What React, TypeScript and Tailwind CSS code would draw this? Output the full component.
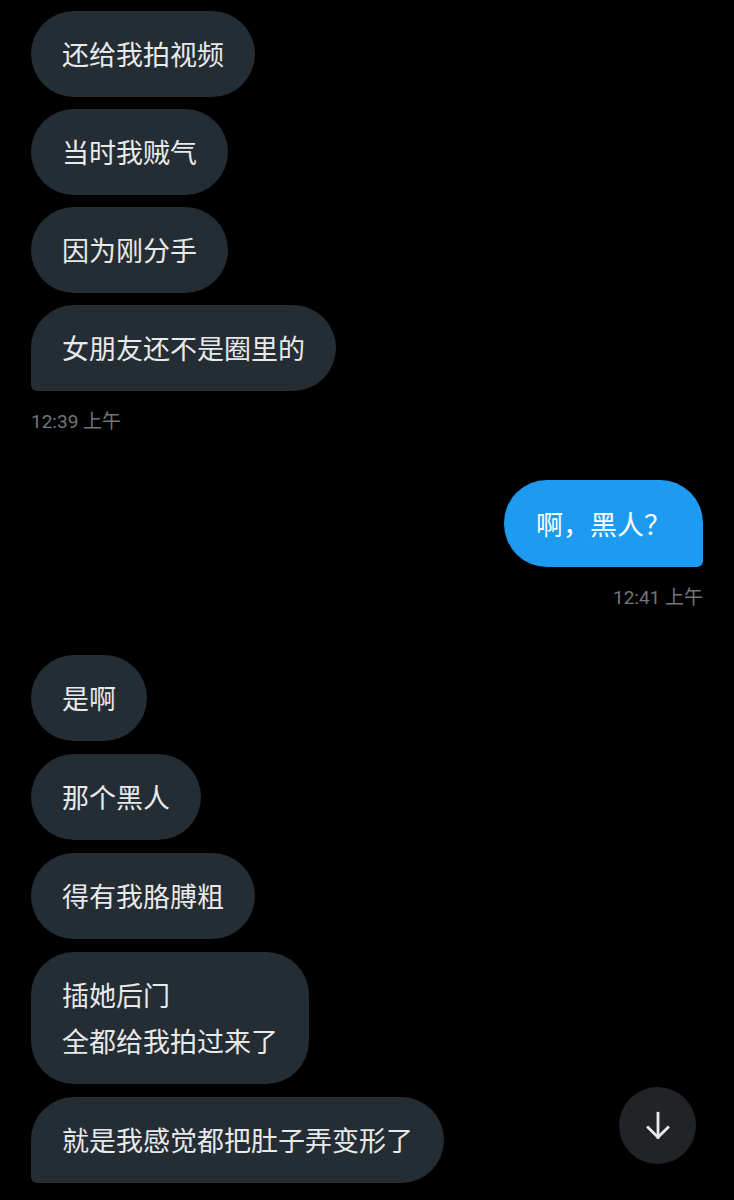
import React from "react";

const font = { fontFamily: '"Noto Sans CJK SC", "Noto Sans", sans-serif' };

function Bubble({ lines, last }: { lines: string[]; last?: boolean }) {
  return (
    <div
      className={`self-start bg-[#242d34] text-[#e7e9ea] text-[27px] leading-[46px] px-[31px] py-[20px] rounded-[43px] ${
        last ? "rounded-bl-[6px]" : ""
      }`}
    >
      {lines.map((l) => (
        <div key={l}>{l}</div>
      ))}
    </div>
  );
}

function Time({ text, right }: { text: string; right?: boolean }) {
  return (
    <div
      className={`text-[19px] leading-[24px] text-[#71767b] mt-[19px] ${right ? "self-end" : "self-start"}`}
      style={{ fontFamily: 'Roboto, "Noto Sans CJK SC", sans-serif' }}
    >
      {text}
    </div>
  );
}

export default function App() {
  return (
    <div className="relative w-[734px] h-[1200px] bg-black overflow-hidden" style={font}>
      <div className="flex flex-col px-[31px] pt-[11px]">
        <div className="flex flex-col gap-[12px]">
          <Bubble lines={["还给我拍视频"]} />
          <Bubble lines={["当时我贼气"]} />
          <Bubble lines={["因为刚分手"]} />
          <Bubble lines={["女朋友还不是圈里的"]} last />
        </div>
        <Time text="12:39 上午" />

        <div className="self-end mt-[46px] bg-[#1d9bf0] text-white text-[27px] leading-[46px] px-[32px] py-[20.5px] rounded-[43px] rounded-br-[6px]">
          啊，黑人？
        </div>
        <Time text="12:41 上午" right />

        <div className="flex flex-col gap-[13px] mt-[45px]">
          <Bubble lines={["是啊"]} />
          <Bubble lines={["那个黑人"]} />
          <Bubble lines={["得有我胳膊粗"]} />
          <Bubble lines={["插她后门", "全都给我拍过来了"]} />
          <Bubble lines={["就是我感觉都把肚子弄变形了"]} last />
        </div>
      </div>

      {/* scroll to bottom */}
      <div className="absolute left-[619px] top-[1087px] w-[77px] h-[77px] rounded-full bg-[#212327] flex items-center justify-center">
        <svg width="34" height="34" viewBox="0 0 24 24" fill="none" stroke="#e7e9ea" strokeWidth="2" strokeLinecap="square">
          <path d="M12 3v17" />
          <path d="M5 13l7 7 7-7" />
        </svg>
      </div>
    </div>
  );
}
